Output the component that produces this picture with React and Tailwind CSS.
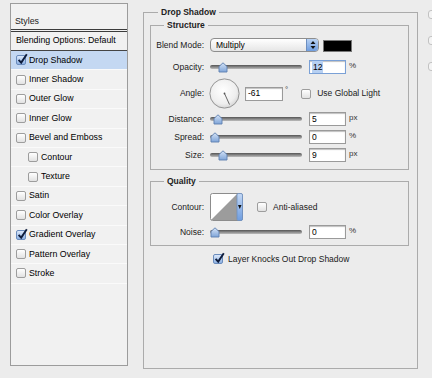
import React from "react";

const font = "font-['Liberation_Sans',Arial,sans-serif]";

function Check({ checked }) {
  if (checked) {
    return (
      <span className="relative flex h-[10px] w-[10px] shrink-0 items-center justify-center rounded-[2px] border border-[#6b8cbc] bg-gradient-to-b from-[#dbe8fa] to-[#8eb2e4]">
        <svg className="absolute -top-[3px] left-0" width="11" height="12" viewBox="0 0 11 12">
          <path d="M1.6 6.8 L4.2 9.6 L9.8 1.2" fill="none" stroke="#0e1c3b" strokeWidth="1.9" />
        </svg>
      </span>
    );
  }
  return (
    <span className="h-[10px] w-[10px] shrink-0 rounded-[2px] border border-[#9d9d9d] bg-gradient-to-b from-white to-[#e2e2e2]" />
  );
}

function Slider({ thumb }) {
  return (
    <div className="relative h-[14px] w-[92px] shrink-0">
      <div className="absolute left-0 right-0 top-[5px] h-[4px] rounded-full bg-gradient-to-b from-[#555] to-[#bdbdbd]" />
      <svg className={`absolute top-[2px] ${thumb}`} width="10" height="11" viewBox="0 0 10 11">
        <defs>
          <linearGradient id="th" x1="0" y1="0" x2="0" y2="1">
            <stop offset="0" stopColor="#d6e4f7" />
            <stop offset="1" stopColor="#7ea4d8" />
          </linearGradient>
        </defs>
        <path d="M1 4.5 L5 0.8 L9 4.5 L9 10 L1 10 Z" fill="url(#th)" stroke="#5d7fb0" strokeWidth="0.9" />
      </svg>
    </div>
  );
}

function Field({ value, w = "w-[37px]", focus }) {
  return (
    <div
      className={`flex h-[14px] shrink-0 items-center border bg-white pl-[2px] text-[8.5px] shadow-[inset_0_1px_1px_rgba(0,0,0,0.25)] ${w} ${
        focus ? "border-[#7aa0d6]" : "border-[#9a9a9a]"
      }`}
    >
      <span className={focus ? "bg-[#b7d0f2] px-[1px]" : ""}>{value}</span>
    </div>
  );
}

function Label({ children }) {
  return <span className="w-[54px] shrink-0 pr-[1px] text-right text-[8.5px] text-[#1a1a1a]">{children}</span>;
}

function SliderRow({ label, thumb, value, unit, cls, focus }) {
  return (
    <div className={`flex h-[14px] items-center gap-[5px] ${cls}`}>
      <Label>{label}</Label>
      <Slider thumb={thumb} />
      <div className="ml-[2px]">
        <Field value={value} focus={focus} />
      </div>
      <span className="-ml-[2px] self-start text-[8px] text-[#333]">{unit}</span>
    </div>
  );
}

const styles = [
  { name: "Drop Shadow", checked: true, active: true },
  { name: "Inner Shadow" },
  { name: "Outer Glow" },
  { name: "Inner Glow" },
  { name: "Bevel and Emboss" },
  { name: "Contour", sub: true },
  { name: "Texture", sub: true },
  { name: "Satin" },
  { name: "Color Overlay" },
  { name: "Gradient Overlay", checked: true },
  { name: "Pattern Overlay" },
  { name: "Stroke" },
];

export default function App() {
  return (
    <div className={`flex h-[378px] w-[432px] overflow-hidden bg-[#ececec] text-black ${font}`}>
      {/* Styles list */}
      <aside className="ml-[10px] mt-[3px] flex h-[363px] w-[118px] shrink-0 flex-col border border-[#9c9c9c] bg-[#f1f1f1]">
        <div className="flex h-[28px] items-center border-b-[3px] border-double border-[#3c3c3c] pl-[4px] pt-[10px] text-[8.8px] text-[#222]">
          Styles
        </div>
        <div className="flex h-[19px] items-center border-b border-[#444] pl-[5px] text-[8.8px]">
          Blending Options: Default
        </div>
        {styles.map((s) => (
          <div
            key={s.name}
            className={`flex h-[19.4px] items-center gap-[3px] border-b border-[#fafafa] text-[8.8px] ${
              s.sub ? "pl-[17px]" : "pl-[5px]"
            } ${s.active ? "bg-[#c4d8f2]" : ""}`}
          >
            <Check checked={s.checked} />
            <span>{s.name}</span>
          </div>
        ))}
      </aside>

      {/* Drop Shadow settings */}
      <fieldset className="ml-[15px] mt-[6px] h-[363px] w-[275px] shrink-0 border border-[#ababab]">
        <legend className="ml-[14px] px-[3px] text-[8.5px] font-bold leading-[12px] text-[#222]">Drop Shadow</legend>

        <fieldset className="ml-[6px] mr-[8px] mt-[1px] border border-[#ababab]">
          <legend className="ml-[13px] px-[3px] text-[8.5px] font-bold leading-[12px] text-[#222]">Structure</legend>
          <div className="flex flex-col pb-[7px] pt-[7px]">
            <div className="flex h-[14px] items-center gap-[5px]">
              <Label>Blend Mode:</Label>
              <div className="flex h-[14px] w-[109px] shrink-0 overflow-hidden rounded-[4px] border border-[#8e8e8e] bg-gradient-to-b from-white to-[#e6e6e6]">
                <span className="flex-1 pl-[5px] text-[8.5px] leading-[12px]">Multiply</span>
                <span className="flex w-[12px] flex-col items-center justify-center gap-[1px] border-l border-[#6d8fc0] bg-gradient-to-b from-[#b9d2f3] to-[#6f9ddf]">
                  <svg width="6" height="10" viewBox="0 0 6 10">
                    <path d="M0.5 4 L3 1 L5.5 4 Z M0.5 6 L3 9 L5.5 6 Z" fill="#111" />
                  </svg>
                </span>
              </div>
              <span className="-ml-[1px] mt-[2px] h-[12px] w-[29px] shrink-0 border border-[#777] bg-black" />
            </div>

            <SliderRow label="Opacity:" thumb="left-[8px]" value="12" unit="%" cls="mt-[8px]" focus />

            <div className="mt-[4px] flex h-[31px] items-center gap-[5px]">
              <Label>Angle:</Label>
              <svg className="-ml-[1px] shrink-0" width="31" height="31" viewBox="0 0 31 31">
                <defs>
                  <radialGradient id="dial" cx="0.45" cy="0.4" r="0.65">
                    <stop offset="0" stopColor="#ffffff" />
                    <stop offset="0.7" stopColor="#eeeeee" />
                    <stop offset="1" stopColor="#cfcfcf" />
                  </radialGradient>
                </defs>
                <circle cx="15.5" cy="15.5" r="14.6" fill="url(#dial)" stroke="#8a8a8a" strokeWidth="0.9" />
                <line x1="15.5" y1="15.5" x2="20.5" y2="26.5" stroke="#555" strokeWidth="0.9" />
                <circle cx="15.5" cy="15.5" r="0.9" fill="#555" />
              </svg>
              <Field value="-61" w="w-[38px]" />
              <span className="-ml-[3px] mb-[8px] text-[8px] text-[#333]">°</span>
              <div className="ml-[8px] flex items-center gap-[6px]">
                <Check />
                <span className="text-[8.5px] text-[#1a1a1a]">Use Global Light</span>
              </div>
            </div>

            <SliderRow label="Distance:" thumb="left-[3px]" value="5" unit="px" cls="mt-[3px]" />
            <SliderRow label="Spread:" thumb="left-[0px]" value="0" unit="%" cls="mt-[4px]" />
            <SliderRow label="Size:" thumb="left-[8px]" value="9" unit="px" cls="mt-[4px]" />
          </div>
        </fieldset>

        <fieldset className="ml-[6px] mr-[8px] mt-[5px] border border-[#ababab]">
          <legend className="ml-[13px] px-[3px] text-[8.5px] font-bold leading-[12px] text-[#222]">Quality</legend>
          <div className="flex flex-col pb-[6px] pt-[6px]">
            <div className="flex h-[28px] items-center gap-[5px]">
              <Label>Contour:</Label>
              <svg className="shrink-0" width="33" height="28" viewBox="0 0 33 28">
                <defs>
                  <linearGradient id="cb" x1="0" y1="0" x2="0" y2="1">
                    <stop offset="0" stopColor="#c3d8f5" />
                    <stop offset="1" stopColor="#6f9ddf" />
                  </linearGradient>
                </defs>
                <rect x="0.5" y="0.5" width="32" height="27" rx="2" fill="#fff" stroke="#8c8c8c" />
                <path d="M1 27 L27 1 L27 27 Z" fill="#9c9c9c" />
                <rect x="27" y="0.5" width="5.5" height="27" rx="1.5" fill="url(#cb)" stroke="#6d8fc0" strokeWidth="0.8" />
                <path d="M28 12 L31.5 12 L29.75 16 Z" fill="#111" />
              </svg>
              <div className="ml-[9px] flex items-center gap-[6px]">
                <Check />
                <span className="text-[8.5px] text-[#1a1a1a]">Anti-aliased</span>
              </div>
            </div>
            <SliderRow label="Noise:" thumb="left-[0px]" value="0" unit="%" cls="mt-[4px]" />
          </div>
        </fieldset>

        <div className="mt-[7px] flex items-center gap-[5px] pl-[69px]">
          <Check checked />
          <span className="text-[8.5px] text-[#1a1a1a]">Layer Knocks Out Drop Shadow</span>
        </div>
      </fieldset>

      {/* clipped buttons on the far right */}
      <div className="ml-[10px] mt-[10px] flex shrink-0 flex-col gap-[17px]">
        <span className="h-[9px] w-[6px] rounded-l-[3px] border border-[#c2c2c2] bg-[#f4f4f4]" />
        <span className="h-[9px] w-[6px] rounded-l-[3px] border border-[#c2c2c2] bg-[#f4f4f4]" />
        <span className="h-[9px] w-[6px] rounded-l-[3px] border border-[#c2c2c2] bg-[#f4f4f4]" />
      </div>
    </div>
  );
}
